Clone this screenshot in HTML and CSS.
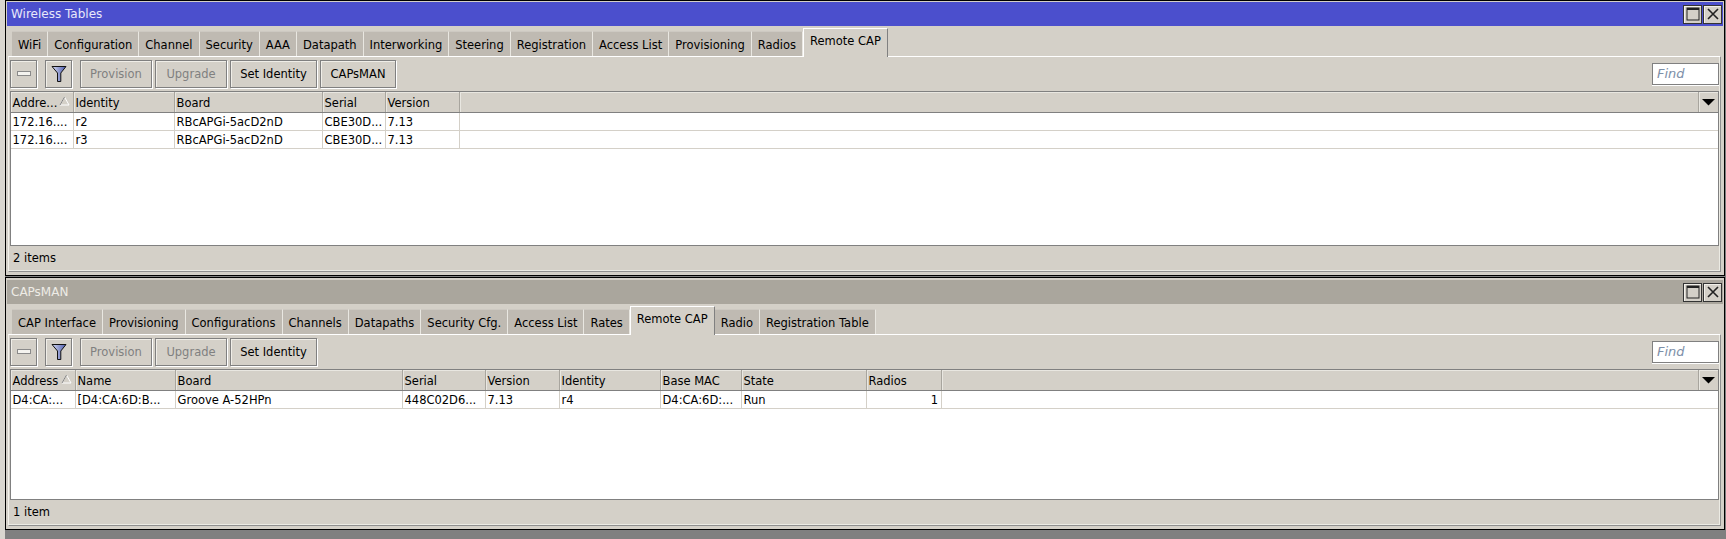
FILE: index.html
```html
<!DOCTYPE html>
<html lang="en">
<head>
<meta charset="utf-8">
<title>Wireless Tables</title>
<link rel="stylesheet" href="styles.css">
</head>
<body>
<div class="desktop">

  <section class="win win-a">
    <header class="title title-active">
      <span class="title-text">Wireless Tables</span>
      <span class="win-btns">
        <span class="win-btn"><svg width="14" height="14" viewBox="0 0 14 14"><rect x="1" y="1" width="12" height="12" fill="none" stroke="#222" stroke-width="1"/><path d="M1 2h12" stroke="#222" stroke-width="2"/></svg></span>
        <span class="win-btn"><svg width="14" height="14" viewBox="0 0 14 14"><path d="M2 2l10 10M12 2L2 12" stroke="#222" stroke-width="1.6" fill="none"/></svg></span>
      </span>
    </header>
    <div class="tabs">
      <span class="tab">WiFi</span><span class="tab">Configuration</span><span class="tab">Channel</span><span class="tab">Security</span><span class="tab">AAA</span><span class="tab">Datapath</span><span class="tab">Interworking</span><span class="tab">Steering</span><span class="tab">Registration</span><span class="tab">Access List</span><span class="tab">Provisioning</span><span class="tab">Radios</span><span class="tab tab-on">Remote CAP</span>
    </div>
    <div class="pane">
      <div class="toolbar">
        <button class="btn btn-icon"><svg width="16" height="8" viewBox="0 0 16 8"><rect x="1.500" y="1.500" width="13" height="4" fill="#f4f3ef" stroke="#8a8a8a"/></svg></button>
        <button class="btn btn-icon btn-filter"><svg width="16" height="18" viewBox="0 0 16 18"><defs><linearGradient id="fa" x1="0" x2="1" y1="0" y2="0"><stop offset="0" stop-color="#d8dcf0"/><stop offset="1" stop-color="#4a5ab0"/></linearGradient></defs><path d="M1 1.500h14L9.800 8v8.500H6.500V8z" fill="url(#fa)" stroke="#111" stroke-width="1"/></svg></button>
        <button class="btn btn-cmd btn-off btn-first">Provision</button>
        <button class="btn btn-cmd btn-off">Upgrade</button>
        <button class="btn btn-text btn-set">Set Identity</button>
        <button class="btn btn-text btn-caps">CAPsMAN</button>
        <div class="find">Find</div>
      </div>
      <div class="table">
        <div class="row head cols-a">
          <div class="cell cell-sort">Addre...<svg class="sort" width="11" height="10" viewBox="0 0 11 10"><path d="M5.500 1L10 9H1z" fill="none" stroke="#fff"/><path d="M5.500 1L1 9" fill="none" stroke="#808080"/></svg></div>
          <div class="cell">Identity</div><div class="cell">Board</div><div class="cell">Serial</div><div class="cell">Version</div><div class="cell"></div>
          <div class="cell cell-menu"><svg width="14" height="7" viewBox="0 0 14 7"><path d="M0 0h13L6.500 6.500z" fill="#000"/></svg></div>
        </div>
        <div class="row cols-a"><div class="cell">172.16....</div><div class="cell">r2</div><div class="cell">RBcAPGi-5acD2nD</div><div class="cell">CBE30D...</div><div class="cell">7.13</div><div class="cell cell-wide"></div></div>
        <div class="row cols-a"><div class="cell">172.16....</div><div class="cell">r3</div><div class="cell">RBcAPGi-5acD2nD</div><div class="cell">CBE30D...</div><div class="cell">7.13</div><div class="cell cell-wide"></div></div>
      </div>
      <div class="status">2 items</div>
    </div>
  </section>

  <section class="win win-b">
    <header class="title title-idle">
      <span class="title-text">CAPsMAN</span>
      <span class="win-btns">
        <span class="win-btn"><svg width="14" height="14" viewBox="0 0 14 14"><rect x="1" y="1" width="12" height="12" fill="none" stroke="#222" stroke-width="1"/><path d="M1 2h12" stroke="#222" stroke-width="2"/></svg></span>
        <span class="win-btn"><svg width="14" height="14" viewBox="0 0 14 14"><path d="M2 2l10 10M12 2L2 12" stroke="#222" stroke-width="1.6" fill="none"/></svg></span>
      </span>
    </header>
    <div class="tabs">
      <span class="tab">CAP Interface</span><span class="tab">Provisioning</span><span class="tab">Configurations</span><span class="tab">Channels</span><span class="tab">Datapaths</span><span class="tab">Security Cfg.</span><span class="tab">Access List</span><span class="tab">Rates</span><span class="tab tab-on">Remote CAP</span><span class="tab">Radio</span><span class="tab">Registration Table</span>
    </div>
    <div class="pane">
      <div class="toolbar">
        <button class="btn btn-icon"><svg width="16" height="8" viewBox="0 0 16 8"><rect x="1.500" y="1.500" width="13" height="4" fill="#f4f3ef" stroke="#8a8a8a"/></svg></button>
        <button class="btn btn-icon btn-filter"><svg width="16" height="18" viewBox="0 0 16 18"><defs><linearGradient id="fb" x1="0" x2="1" y1="0" y2="0"><stop offset="0" stop-color="#d8dcf0"/><stop offset="1" stop-color="#4a5ab0"/></linearGradient></defs><path d="M1 1.500h14L9.800 8v8.500H6.500V8z" fill="url(#fb)" stroke="#111" stroke-width="1"/></svg></button>
        <button class="btn btn-cmd btn-off btn-first">Provision</button>
        <button class="btn btn-cmd btn-off">Upgrade</button>
        <button class="btn btn-text btn-set">Set Identity</button>
        <div class="find">Find</div>
      </div>
      <div class="table">
        <div class="row head cols-b">
          <div class="cell cell-sort">Address<svg class="sort" width="11" height="10" viewBox="0 0 11 10"><path d="M5.500 1L10 9H1z" fill="none" stroke="#fff"/><path d="M5.500 1L1 9" fill="none" stroke="#808080"/></svg></div>
          <div class="cell">Name</div><div class="cell">Board</div><div class="cell">Serial</div><div class="cell">Version</div><div class="cell">Identity</div><div class="cell">Base MAC</div><div class="cell">State</div><div class="cell">Radios</div><div class="cell"></div>
          <div class="cell cell-menu"><svg width="14" height="7" viewBox="0 0 14 7"><path d="M0 0h13L6.500 6.500z" fill="#000"/></svg></div>
        </div>
        <div class="row cols-b"><div class="cell">D4:CA:...</div><div class="cell">[D4:CA:6D:B...</div><div class="cell">Groove A-52HPn</div><div class="cell">448C02D6...</div><div class="cell">7.13</div><div class="cell">r4</div><div class="cell">D4:CA:6D:...</div><div class="cell">Run</div><div class="cell cell-num">1</div><div class="cell cell-wide"></div></div>
      </div>
      <div class="status">1 item</div>
    </div>
  </section>

</div>
</body>
</html>
```

FILE: styles.css
```css
* { box-sizing: border-box; }
html, body { margin: 0; height: 100%; }
body {
  font-family: "DejaVu Sans", sans-serif;
  font-size: 11.5px;
  color: #000;
  overflow: hidden;
}
.desktop {
  width: 1726px;
  height: 539px;
  padding: 0 1px 0 5px;
  background: linear-gradient(to right, #d9d6cf 5px, #808080 5px);
}
.win {
  display: flex;
  flex-direction: column;
  border: 1px solid #000;
  padding: 1px;
  background: #d4d0c8;
}
.win-a { height: 276px; margin-bottom: 1px; }
.win-b { height: 253px; padding-top: 2px; }

.title {
  height: 24px;
  flex: none;
  display: flex;
  align-items: center;
  justify-content: space-between;
  padding: 0 1px 0 4px;
  font-size: 12px;
}
.title-active { background: #4b4fcd; color: #e8e8fa; }
.title-idle { background: #aaa69d; color: #eeece6; }
.win-btns { display: flex; gap: 1px; }
.win-btn {
  width: 19px;
  height: 19px;
  display: flex;
  align-items: center;
  justify-content: center;
  background: #d4d0c8;
  border: 1px solid #333;
  box-shadow: inset 1px 1px 0 #f2f0ea;
}

.tabs {
  height: 30px;
  flex: none;
  display: flex;
  align-items: flex-end;
  padding-left: 5px;
  position: relative;
  z-index: 1;
}
.tab {
  height: 25px;
  padding: 1px 6px 0;
  display: flex;
  align-items: center;
  background: #bfbab2;
  border-top: 1px solid #cdc9c2;
  border-right: 1px solid #e9e7e1;
  white-space: nowrap;
}
.tab-on {
  height: 29px;
  margin-bottom: -1px;
  padding: 1px 6px 5px;
  background: #d4d0c8;
  border-top: 1px solid #fff;
  border-left: 1px solid #fff;
  border-right: 1px solid #808080;
}

.pane {
  flex: 1;
  display: flex;
  flex-direction: column;
  min-height: 0;
  margin: 0 2px 2px 1px;
  padding: 0 1px;
  border-top: 1px solid #fff;
  border-left: 1px solid #f2f0ea;
  border-right: 1px solid #8f8f8f;
  border-bottom: 1px solid #8f8f8f;
  box-shadow: inset -1px -1px 0 #ecebe4;
}
.toolbar {
  height: 34px;
  flex: none;
  display: flex;
  align-items: flex-start;
  padding-top: 3px;
  gap: 3px;
}
.btn {
  height: 28px;
  padding: 0;
  margin: 0;
  display: flex;
  align-items: center;
  justify-content: center;
  background: #d4d0c8;
  border: 1px solid #808080;
  box-shadow: 1px 1px 0 #fff, inset 1px 1px 0 #f0eee8;
  font: inherit;
  color: #000;
}
.btn-icon { width: 27px; }
.btn-filter { margin-left: 5px; }
.btn-cmd { width: 72px; }
.btn-first { margin-left: 5px; }
.btn-off { color: #808080; }
.btn-set { width: 87px; }
.btn-caps { width: 76px; }
.find {
  margin-left: auto;
  margin-top: 3px;
  width: 67px;
  height: 22px;
  padding-left: 4px;
  line-height: 20px;
  background: #fff;
  border: 1px solid #808080;
  box-shadow: 0 1px 0 #fff;
  color: #7d8fa8;
  font-style: italic;
  font-size: 13px;
}

.table {
  flex: 1;
  min-height: 0;
  background: #fff;
  border: 1px solid #808080;
}
.row {
  display: grid;
  height: 18px;
  border-bottom: 1px solid #d4d0c8;
}
.cols-a { grid-template-columns: 63px 101px 148px 63px 74px 1fr 19px; }
.cols-b { grid-template-columns: 65px 100px 227px 83px 74px 101px 81px 125px 75px 1fr 19px; }
.head {
  height: 21px;
  background: #d4d0c8;
  border-bottom: 1px solid #808080;
}
.cell {
  display: flex;
  align-items: center;
  padding: 1px 0 0 1.500px;
  border-right: 1px solid #d4d0c8;
  white-space: nowrap;
  overflow: hidden;
}
.head .cell { border-right: 1px solid #a8a59e; box-shadow: inset 1px 1px 0 #e9e7e1; }
.cell-wide { grid-column: span 2; border-right: 0; }
.cell-sort { position: relative; }
.sort { position: absolute; right: 3px; top: 4px; }
.head .cell-menu { justify-content: center; padding-left: 0; border-right: 0; }
.cell-num { justify-content: flex-end; padding-right: 3px; }

.status {
  height: 25px;
  flex: none;
  display: flex;
  align-items: center;
  padding: 0 0 2px 3px;
}
```
